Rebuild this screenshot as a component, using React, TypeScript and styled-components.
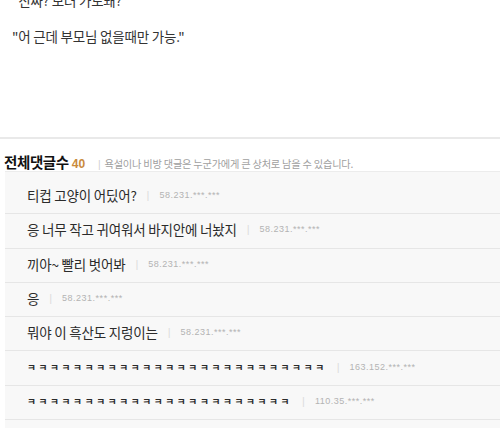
import React from "react";
import styled, { createGlobalStyle } from "styled-components";

const Global = createGlobalStyle`
  html, body { margin: 0; padding: 0; background: #fff; }
  body { width: 500px; height: 428px; overflow: hidden; font-family: "Noto Sans CJK KR", "Noto Sans", sans-serif; }
`;

const Page = styled.div`
  width: 500px;
  height: 428px;
  overflow: hidden;
  display: flex;
  flex-direction: column;
  & > * { flex-shrink: 0; }
`;

const Story = styled.div`
  padding: 0 0 0 12px;
  margin-top: -9px;
  height: 146px;
  display: flex;
  flex-direction: column;
  gap: 18px;
`;

const Line = styled.p`
  margin: 0;
  font-size: 13.5px;
  line-height: 18px;
  color: #333;
  letter-spacing: -0.2px;
`;

const Divider = styled.div`
  height: 2px;
  background: #e9e9e9;
`;

const Header = styled.div`
  display: flex;
  align-items: baseline;
  padding: 12px 0 0 4px;
  height: 18px;
`;

const Title = styled.span`
  font-weight: 700;
  font-size: 14.5px;
  color: #111;
  letter-spacing: -0.4px;
`;

const Count = styled.span`
  font-weight: 700;
  font-size: 12px;
  color: #c98a3c;
  margin-left: 3px;
  font-family: "Liberation Sans", sans-serif;
`;

const Notice = styled.span`
  font-size: 10.2px;
  color: #a0a0a0;
  margin-left: 13px;
  letter-spacing: -0.2px;
`;

const Bar = styled.span`
  color: #cfcfcf;
  margin-right: 4px;
  font-family: "Liberation Sans", sans-serif;
`;

const List = styled.div`
  margin: 2px 0 0 5px;
  border-top: 1px solid #ececec;
  background: #f8f8f8;
  padding-top: 8px;
  flex: 1 0 auto;
`;

const Row = styled.div`
  height: 30.3px;
  border-bottom: 1px solid #e6e6e6;
  display: flex;
  align-items: center;
  padding: 0 0 3px 22px;
  box-sizing: content-box;
`;

const FirstRow = styled(Row)`
  height: 30.3px;
  padding-bottom: 3px;
`;

const Text = styled.span<{ $laugh?: boolean }>`
  font-size: ${(p) => (p.$laugh ? "9.6px" : "13.5px")};
  font-weight: ${(p) => (p.$laugh ? 700 : 400)};
  letter-spacing: ${(p) => (p.$laugh ? "2.7px" : "-0.2px")};
  color: #2b2b2b;
`;

const Sep = styled.span`
  color: #dcdcdc;
  font-size: 11px;
  margin: 0 10px 0 10px;
  font-family: "Liberation Sans", sans-serif;
`;

const Ip = styled.span`
  font-family: "Liberation Sans", sans-serif;
  font-size: 9px;
  letter-spacing: 0.5px;
  color: #b3b3b3;
`;

const comments = [
  { text: "티컵 고양이 어딨어?", ip: "58.231.***.***" },
  { text: "응 너무 작고 귀여워서 바지안에 너놨지", ip: "58.231.***.***" },
  { text: "끼아~ 빨리 벗어봐", ip: "58.231.***.***" },
  { text: "응", ip: "58.231.***.***" },
  { text: "뭐야 이 흑산도 지렁이는", ip: "58.231.***.***" },
  { text: "ㅋ".repeat(26), ip: "163.152.***.***", laugh: true },
  { text: "ㅋ".repeat(23), ip: "110.35.***.***", laugh: true },
  { text: "", ip: "", laugh: false },
];

export default function App() {
  return (
    <Page>
      <Global />
      <Story>
        <Line>"진짜? 보러 가도돼?"</Line>
        <Line>"어 근데 부모님 없을때만 가능."</Line>
      </Story>
      <Divider />
      <Header>
        <Title>전체댓글수</Title>
        <Count>40</Count>
        <Notice>
          <Bar>|</Bar>욕설이나 비방 댓글은 누군가에게 큰 상처로 남을 수 있습니다.
        </Notice>
      </Header>
      <List>
        {comments.map((c, i) => {
          const R = i === 0 ? FirstRow : Row;
          return (
            <R key={i}>
              <Text $laugh={c.laugh}>{c.text}</Text>
              {c.ip && <Sep>|</Sep>}
              {c.ip && <Ip>{c.ip}</Ip>}
            </R>
          );
        })}
      </List>
    </Page>
  );
}
